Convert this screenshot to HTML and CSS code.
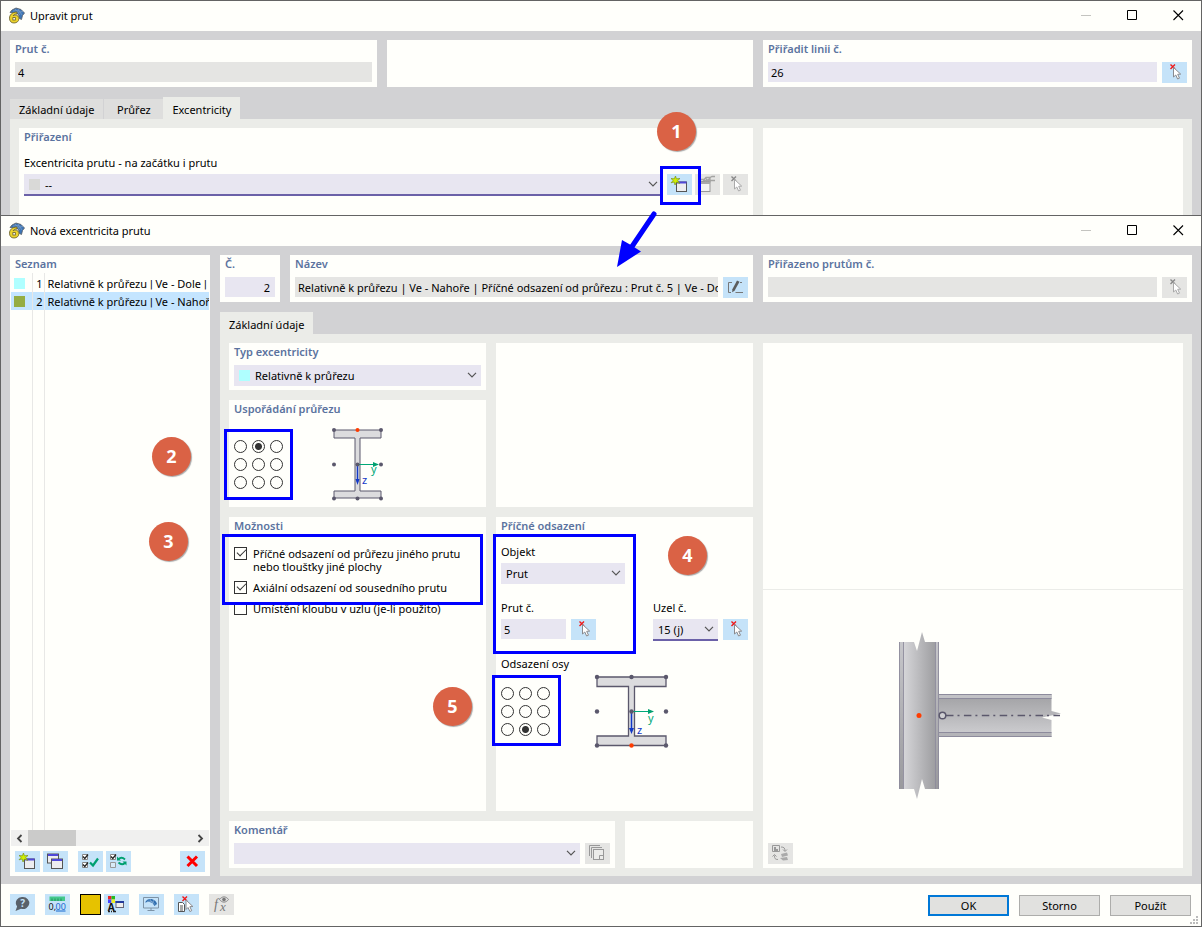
FILE: index.html
```html
<!DOCTYPE html>
<html lang="cs">
<head>
<meta charset="utf-8">
<title>Nová excentricita prutu</title>
<link rel="stylesheet" href="styles.css">
</head>
<body>
<svg class="defs" aria-hidden="true">
  <defs>
    <symbol id="i-app" viewBox="0 0 17 17">
      <path d="M2 5.500 4 3l4-2 5 1.500 3.500 3.500-2 2.500-1 4-2-1-1-4L8 6Z" fill="#3c76b8" stroke="#555a60" stroke-width=".8"/>
      <path d="M5 4 11 3.500M7 2l5 6M10 2l4 6M8 5.500l7-1" stroke="#7f9fc4" stroke-width=".7"/>
      <path d="M9 5C4 5 1.500 8 1.500 11.200c0 3 1.700 4.800 4.500 4.800 2.800 0 4.900-1.800 4.900-4.300 0-2.300-1.500-3.700-3.700-3.700-.8 0-1.500.3-2 .7C5.700 7.600 7 7 9 7Z" fill="#ecd32c" stroke="#625b27" stroke-width=".8"/>
      <rect x="4.900" y="10.600" width="2.400" height="2.400" fill="#fff" stroke="#625b27" stroke-width=".8"/>
    </symbol>
    <symbol id="i-pick" viewBox="0 0 25 21">
      <path d="m8.500 2.500 4.500 4.500M13 2.500 8.500 7" class="cross"/>
      <path d="M11.500 5.500v9.500l2.300-2 1.800 4 1.900-.8-1.800-3.900 3-.2Z" fill="#fff" class="pointer"/>
    </symbol>
    <symbol id="i-new" viewBox="0 0 25 21">
      <rect x="9.500" y="8" width="10" height="9.500" fill="#ededf0" stroke="#555"/>
      <path d="M10 7.500h9.500v2H10z" fill="#5048d8"/>
      <path d="m8.500 2 .9 2.800 3.600-.3-2.400 2 2 3-3-1.500L8 11l-.8-3-3.200.8 2.200-2.300-2.200-2 3.300.3Z" fill="#d0f000" stroke="#7a9418" stroke-width=".7"/>
    </symbol>
    <symbol id="i-edit" viewBox="0 0 25 21">
      <rect x="5.500" y="7.500" width="9.500" height="10" fill="#f4f4f2" stroke="#999"/>
      <path d="M6 8h9v2H6z" fill="#aaa"/>
      <path d="M6 5.500h3l2-2h4l2-1h3M8 6.500h12M11 4.500l2 3M15 3.500v5M10 7.500l5-3" fill="none" stroke="#a4a4a2" stroke-width="1.300"/>
    </symbol>
    <symbol id="i-copy" viewBox="0 0 25 21">
      <rect x="4.500" y="3" width="11" height="9" fill="#ededf0" stroke="#555"/><path d="M5 3h10v2H5z" fill="#5048d8"/>
      <rect x="8.500" y="8" width="11" height="9.500" fill="#ededf0" stroke="#555"/><path d="M9 8h10v2H9z" fill="#5048d8"/>
    </symbol>
    <symbol id="i-rename" viewBox="0 0 25 21">
      <path d="M9 5.500H5.500v10H8M12.500 15.500H20M17 5.500h2" fill="none" stroke="#777"/>
      <path d="m14 3.500 2.500 1.200-5 9-2.300 1.500.2-2.900Z" fill="#5c5c5c"/>
    </symbol>
    <symbol id="i-checkall" viewBox="0 0 25 21">
      <path d="M4.500 3.500h5v5h-5zM4.500 11.500h5v5h-5z" fill="#fff" stroke="#888"/>
      <path d="m5 5.500 1.800 2L10 3.500M5 13.500l1.800 2 3.200-4" fill="none" stroke="#222" stroke-width="1.300"/>
      <path d="m12 11.500 3 3 5-7" fill="none" stroke="#00a070" stroke-width="2.200"/>
    </symbol>
    <symbol id="i-invert" viewBox="0 0 25 21">
      <path d="M4.500 3.500h5v5h-5z" fill="#fff" stroke="#888"/><path d="M4.500 11.500h5v5h-5z" fill="#d9ebf7" stroke="#999"/>
      <path d="m5 5.500 1.800 2L10 3.500" fill="none" stroke="#222" stroke-width="1.300"/>
      <path d="M12.500 8c2-1.700 4.500-1.500 6.500.5M19 12c-2 1.700-4.500 1.500-6.500-.5" fill="none" stroke="#00a070" stroke-width="1.800"/>
      <path d="M11 5.500v4h4ZM20.500 14.500v-4h-4Z" fill="#00a070"/>
    </symbol>
    <symbol id="i-delete" viewBox="0 0 25 21"><path d="m7.500 5.500 9.500 9.500M17 5.500 7.500 15" stroke="#f00" stroke-width="3"/></symbol>
    <symbol id="i-help" viewBox="0 0 25 21">
      <path d="M13 3a6.300 6 0 1 1-2 11.700L5.500 17l1.600-4.500A6.200 6 0 0 1 13 3Z" fill="#59616a"/>
      <text x="10.200" y="12.800" font-size="10" font-weight="700" fill="#c5e3f9">?</text>
    </symbol>
    <symbol id="i-units" viewBox="0 0 25 21">
      <rect x="4.500" y="2.500" width="15.500" height="4.500" fill="#43c98b"/>
      <path d="M7 4.500V7M10 4.500V7M13 4.500V7M16 4.500V7" stroke="#278a5c"/>
      <text x="3.500" y="15.500" font-size="9" fill="#111">0,</text><text x="10.500" y="15.500" font-size="9" fill="#1768d0">00</text>
      <path d="M11 17h9.500" stroke="#1768d0"/>
    </symbol>
    <symbol id="i-display" viewBox="0 0 25 21">
      <path d="M4 2h3.500v3.500H4z" fill="#e22"/><path d="M7.500 2H11v3.500H7.500z" fill="#2b2"/><path d="M4 5.500h3.500V9H4z" fill="#44f"/><path d="M7.500 5.500H11V9H7.500z" fill="#ee2"/>
      <text x="3.800" y="16.500" font-size="10" font-weight="700" fill="#111">A</text>
      <path d="M4 17.500h2M7 17.500h1M9 17.500h3" stroke="#222" stroke-width="1.400"/>
      <rect x="12" y="7.500" width="7.500" height="6" fill="#eee" stroke="#667"/><path d="M11.500 7h8.500v2h-8.500z" fill="#223b9b"/>
    </symbol>
    <symbol id="i-screen" viewBox="0 0 25 21">
      <path d="M4.500 3.500h15v10.500h-15zM12 14v2.500M8.500 16.500h7" fill="none" stroke="#7d93a6"/>
      <path d="M6 8.500C7.500 5.500 10 4.500 12.500 5c3 .5 5 2.500 5.500 5l-2.500 2-2-3-3.500-1.200Z" fill="#2e6eb0"/><path d="M8 7.500c3-1 6 0 8 3M11 5l1.500 3M15 6l-1.500 3" fill="none" stroke="#a8c5e0" stroke-width=".6"/>
    </symbol>
    <symbol id="i-pickdoc" viewBox="0 0 25 21">
      <path d="M4.500 8.500h4l2 2v7h-6zM6 12h3M6 14h3M6 16h3" fill="#fff" stroke="#555"/>
      <path d="m8.500 2.500 4.500 4.500M13 2.500 8.500 7" class="cross"/>
      <path d="M12 6v9.500l2-2 1.900 4 1.800-.8-1.800-4 3-.2Z" fill="#fff" stroke="#8a8a8e"/>
    </symbol>
    <symbol id="i-fx" viewBox="0 0 25 21">
      <text x="5" y="14.500" font-size="14" font-style="italic" class="serif">f</text><text x="11" y="17" font-size="13" font-style="italic" class="serif">x</text>
      <path d="M10.500 5.500c2.500-3.500 6.500-3.500 9 0-2.500 3.500-6.500 3.500-9 0Z" fill="#ddd" stroke="#888"/><circle cx="15" cy="5.500" r="1.800" fill="#777"/>
    </symbol>
    <symbol id="i-library" viewBox="0 0 25 21">
      <path d="M4.500 13V2.500H15M6.500 15V4.500H17" fill="none" stroke="#999"/><rect x="8.500" y="6.500" width="10" height="10" fill="#ececea" stroke="#999"/><path d="M18.500 12.500h-4v4" fill="none" stroke="#999"/>
    </symbol>
    <symbol id="i-swap" viewBox="0 0 25 21">
      <path d="M4.500 2.500h7v6h-7z" fill="none" stroke="#999"/><path d="M6 4h2v2h2v2H6z" fill="#999"/>
      <path d="m13 11 6-1.500 1 3-6 1.500ZM12 15l7-1 1 3-5 .5Z" fill="#aaa"/>
      <path d="M13 4c3 0 4 1 4 4M15 6.500 17 8.500l2-2M10 16.500c-3 0-3.500-1-3.500-4M4.500 13.500l2-2 2 2" fill="none" stroke="#999"/>
    </symbol>
    <symbol id="i-chev" viewBox="0 0 10 6"><path d="m1 .8 4 4 4-4" fill="none" stroke="#555" stroke-width="1.200"/></symbol>
    <symbol id="i-min" viewBox="0 0 11 11"><path d="M0 5.500h10" stroke="#c4c4c0"/></symbol>
    <symbol id="i-max" viewBox="0 0 11 11"><path d="M.5.5h9v9h-9z" fill="none" stroke="#000"/></symbol>
    <symbol id="i-close" viewBox="0 0 11 11"><path d="m.5.5 9.500 9.500M10 .5.500 10" stroke="#000" stroke-width="1.100"/></symbol>
    <linearGradient id="g-col"><stop offset="0" stop-color="#dedee1"/><stop offset="1" stop-color="#97979a"/></linearGradient>
    <linearGradient id="g-fl" x2="0" y2="1"><stop offset="0" stop-color="#c6c6ca"/><stop offset="1" stop-color="#99999d"/></linearGradient>
    <linearGradient id="g-beam" x2="0" y2="1"><stop offset="0" stop-color="#a0a0a3"/><stop offset="1" stop-color="#d0d0d3"/></linearGradient>
  </defs>
</svg>

<section class="window window-back">
  <header class="titlebar">
    <svg class="app-icon"><use href="#i-app"/></svg><h1>Upravit prut</h1>
    <div class="win-buttons">
      <button aria-label="Minimalizovat"><svg><use href="#i-min"/></svg></button>
      <button aria-label="Maximalizovat"><svg><use href="#i-max"/></svg></button>
      <button aria-label="Zavřít"><svg><use href="#i-close"/></svg></button>
    </div>
  </header>
  <div class="window-body">
    <div class="top-row">
      <div class="panel"><label class="title" for="member">Prut č.</label><input id="member" class="field readonly" value="4" readonly></div>
      <div class="panel"></div>
      <div class="panel"><label class="title" for="line">Přiřadit linii č.</label>
        <div class="row"><input id="line" class="field" value="26"><button class="tool" aria-label="Vybrat linii"><svg><use href="#i-pick"/></svg></button></div></div>
    </div>
    <nav class="tabs"><button class="tab">Základní údaje</button><button class="tab">Průřez</button><button class="tab active">Excentricity</button></nav>
    <div class="page assign-page">
      <div class="panel assign">
        <h2 class="title">Přiřazení</h2>
        <label class="caption" for="ecc">Excentricita prutu - na začátku i prutu</label>
        <div class="row">
          <span class="combo underlined"><i class="swatch none"></i><select id="ecc" class="with-swatch"><option>--</option></select><svg class="chev"><use href="#i-chev"/></svg></span>
          <span class="tools">
            <button class="tool" aria-label="Nová excentricita"><svg><use href="#i-new"/></svg></button>
            <button class="tool disabled" aria-label="Upravit excentricitu" disabled><svg><use href="#i-edit"/></svg></button>
            <button class="tool disabled" aria-label="Vybrat excentricitu" disabled><svg><use href="#i-pick"/></svg></button>
            <span class="mark mark-1"></span><span class="badge badge-1">1</span>
            <svg class="arrow" viewBox="0 0 42 60"><path d="M38 5 15 39" stroke="#00f" stroke-width="5" stroke-linecap="round"/><path d="m1 58 5-27 8 4.500 11 7Z" fill="#00f"/></svg>
          </span>
        </div>
      </div>
      <div class="panel"></div>
    </div>
  </div>
</section>

<main class="window window-front">
  <header class="titlebar">
    <svg class="app-icon"><use href="#i-app"/></svg><h1>Nová excentricita prutu</h1>
    <div class="win-buttons">
      <button aria-label="Minimalizovat"><svg><use href="#i-min"/></svg></button>
      <button aria-label="Maximalizovat"><svg><use href="#i-max"/></svg></button>
      <button aria-label="Zavřít"><svg><use href="#i-close"/></svg></button>
    </div>
  </header>
  <div class="window-body dialog-body">
    <aside class="panel list-panel">
      <h2 class="title">Seznam</h2>
      <div class="list">
        <table>
          <tr><td><i class="swatch cyan"></i></td><td class="num">1</td><td class="name">Relativně k průřezu <span class="pipe">|</span> Ve - Dole <span class="pipe">|</span></td></tr>
          <tr class="selected"><td><i class="swatch olive"></i></td><td class="num">2</td><td class="name">Relativně k průřezu <span class="pipe">|</span> Ve - Nahoře</td></tr>
        </table>
      </div>
      <div class="scrollbar"><svg viewBox="0 0 7 9"><path d="M5.500 1 2 4.500 5.500 8" fill="none" stroke="#444" stroke-width="1.800"/></svg><i></i><svg viewBox="0 0 7 9"><path d="M1.500 1 5 4.500 1.500 8" fill="none" stroke="#444" stroke-width="1.800"/></svg></div>
      <div class="list-tools">
        <button class="tool" aria-label="Nový"><svg><use href="#i-new"/></svg></button>
        <button class="tool" aria-label="Kopírovat"><svg><use href="#i-copy"/></svg></button>
        <button class="tool apart" aria-label="Vybrat vše"><svg><use href="#i-checkall"/></svg></button>
        <button class="tool" aria-label="Invertovat výběr"><svg><use href="#i-invert"/></svg></button>
        <button class="tool last" aria-label="Smazat"><svg><use href="#i-delete"/></svg></button>
      </div>
    </aside>
    <div class="detail">
      <div class="name-row">
        <div class="panel"><label class="title" for="no">Č.</label><input id="no" class="field number" value="2"></div>
        <div class="panel"><label class="title" for="name">Název</label>
          <div class="row"><input id="name" class="field readonly long" readonly value="Relativně k průřezu | Ve - Nahoře | Příčné odsazení od průřezu : Prut č. 5 | Ve - Dole"><button class="tool" aria-label="Přejmenovat"><svg><use href="#i-rename"/></svg></button></div></div>
        <div class="panel"><label class="title" for="assigned">Přiřazeno prutům č.</label>
          <div class="row"><input id="assigned" class="field readonly" readonly><button class="tool disabled" aria-label="Vybrat pruty" disabled><svg><use href="#i-pick"/></svg></button></div></div>
      </div>
      <nav class="tabs"><button class="tab active">Základní údaje</button></nav>
      <div class="page form-page">
        <div class="form">
          <div class="form-columns">
            <div class="panel type"><label class="title" for="type">Typ excentricity</label>
              <span class="combo"><i class="swatch cyan"></i><select id="type" class="with-swatch"><option>Relativně k průřezu</option></select><svg class="chev"><use href="#i-chev"/></svg></span></div>
            <div class="panel blank"></div>
            <div class="panel arrangement">
              <h2 class="title">Uspořádání průřezu</h2>
              <div class="section-row">
                <div class="radios" role="radiogroup" aria-label="Uspořádání průřezu">
                  <input type="radio" name="a" aria-label="Vlevo nahoře"><input type="radio" name="a" aria-label="Nahoře" checked><input type="radio" name="a" aria-label="Vpravo nahoře">
                  <input type="radio" name="a" aria-label="Vlevo"><input type="radio" name="a" aria-label="Střed"><input type="radio" name="a" aria-label="Vpravo">
                  <input type="radio" name="a" aria-label="Vlevo dole"><input type="radio" name="a" aria-label="Dole"><input type="radio" name="a" aria-label="Vpravo dole">
                  <span class="mark mark-2"></span><span class="badge badge-2">2</span>
                </div>
                <svg class="profile small" viewBox="0 0 56 76">
                  <path d="M4 4h47v8H30v53h21v7H4v-7h21V12H4Z" fill="#dcdcde" stroke="#5b586c"/>
                  <path d="M27.500 38.500H44" stroke="#00a878"/><path d="m43 36 6 2.500-6 2.500Z" fill="#00a070"/><path d="M27.500 39v17" stroke="#1238c8" stroke-width="1.500"/><path d="m25.500 53 2 6 2-6Z" fill="#1238c8"/>
                  <g fill="#5b586c"><circle cx="4" cy="4" r="2"/><circle cx="51" cy="4" r="2"/><circle cx="4" cy="38.500" r="2"/><circle cx="27.500" cy="38.500" r="2"/><circle cx="51" cy="38.500" r="2"/><circle cx="4" cy="72.500" r="2"/><circle cx="27.500" cy="72.500" r="2"/><circle cx="51" cy="72.500" r="2"/></g><circle cx="27.500" cy="4" r="2" fill="#ff3c00"/>
                  <text x="41" y="47" fill="#00a878">y</text><text x="32" y="58" fill="#1238c8">z</text>
                </svg>
              </div>
            </div>
            <div class="panel options">
              <h2 class="title">Možnosti</h2>
              <div class="checks">
                <label><input type="checkbox" checked><span>Příčné odsazení od průřezu jiného prutu<br>nebo tloušťky jiné plochy</span></label>
                <label><input type="checkbox" checked><span>Axiální odsazení od sousedního prutu</span></label>
                <label><input type="checkbox"><span>Umístění kloubu v uzlu (je-li použito)</span></label>
                <span class="mark mark-3"></span><span class="badge badge-3">3</span>
              </div>
            </div>
            <div class="panel offset">
              <h2 class="title">Příčné odsazení</h2>
              <div class="offset-fields">
                <div class="item object"><label class="caption" for="obj">Objekt</label><span class="combo"><select id="obj"><option>Prut</option></select><svg class="chev"><use href="#i-chev"/></svg></span></div>
                <div class="item"><label class="caption" for="refmember">Prut č.</label><div class="row"><input id="refmember" class="field short" value="5"><button class="tool" aria-label="Vybrat prut"><svg><use href="#i-pick"/></svg></button></div></div>
                <div class="item right"><label class="caption" for="node">Uzel č.</label><div class="row"><span class="combo short underlined"><select id="node"><option>15 (j)</option></select><svg class="chev"><use href="#i-chev"/></svg></span><button class="tool" aria-label="Vybrat uzel"><svg><use href="#i-pick"/></svg></button></div></div>
                <span class="mark mark-4"></span><span class="badge badge-4">4</span>
              </div>
              <div class="caption axis-caption">Odsazení osy</div>
              <div class="section-row axis">
                <div class="radios" role="radiogroup" aria-label="Odsazení osy">
                  <input type="radio" name="b" aria-label="Vlevo nahoře"><input type="radio" name="b" aria-label="Nahoře"><input type="radio" name="b" aria-label="Vpravo nahoře">
                  <input type="radio" name="b" aria-label="Vlevo"><input type="radio" name="b" aria-label="Střed"><input type="radio" name="b" aria-label="Vpravo">
                  <input type="radio" name="b" aria-label="Vlevo dole"><input type="radio" name="b" aria-label="Dole" checked><input type="radio" name="b" aria-label="Vpravo dole">
                  <span class="mark mark-5"></span><span class="badge badge-5">5</span>
                </div>
                <svg class="profile" viewBox="0 0 78 76">
                  <path d="M4 4h69v9.500H41.500v49.500H73V72.500H4v-9.500h31.500V13.500H4Z" fill="#dcdcde" stroke="#5b586c" stroke-width="1.300"/>
                  <path d="M38.500 38.500H56" stroke="#00a878"/><path d="m55 36 6 2.500-6 2.500Z" fill="#00a070"/><path d="M38.500 39v17" stroke="#1238c8" stroke-width="1.500"/><path d="m36 55 2.500 6 2.500-6Z" fill="#1238c8"/>
                  <g fill="#5b586c"><circle cx="4" cy="4" r="2.200"/><circle cx="38.500" cy="4" r="2.200"/><circle cx="73" cy="4" r="2.200"/><circle cx="4" cy="38.500" r="2.200"/><circle cx="38.500" cy="38.500" r="2.200"/><circle cx="73" cy="38.500" r="2.200"/><circle cx="4" cy="72.500" r="2.200"/><circle cx="73" cy="72.500" r="2.200"/></g><circle cx="38.500" cy="72.500" r="2.200" fill="#ff3c00"/>
                  <text x="55" y="49" fill="#00a878">y</text><text x="44" y="61" fill="#1238c8">z</text>
                </svg>
              </div>
            </div>
          </div>
          <div class="comment-row">
            <div class="panel comment"><label class="title" for="comment">Komentář</label>
              <div class="row"><span class="combo"><select id="comment"><option></option></select><svg class="chev"><use href="#i-chev"/></svg></span><button class="tool disabled" aria-label="Knihovna komentářů" disabled><svg><use href="#i-library"/></svg></button></div></div>
            <div class="panel filler"></div>
          </div>
        </div>
        <div class="panel preview">
          <div class="preview-top"></div>
          <div class="preview-bottom">
            <div class="stage">
              <svg viewBox="0 0 176 170" class="joint" role="img" aria-label="Spoj prutů">
                <path d="M54 62h112.500v17l9.500 2.500-19 4 9.500 2.500v17H54Z" fill="url(#g-beam)"/>
                <path d="M54 62h112.500v4.500H54Z" fill="#c2c2c6"/><path d="M54 100.500h112.500v4.500H54Z" fill="#b4b4b8"/>
                <path d="M54 62.500h112.500M54 66.500h112.500M54 100.500h112.500M54 104.500h112.500" stroke="#8d8b9c"/>
                <path d="M14 10h15l3 9 5-19 3 10h14v147H40l-3-10-5 20-3-10H14Z" fill="url(#g-col)"/>
                <path d="M14 10h4v147h-4ZM50 10h4v147h-4Z" fill="url(#g-fl)"/>
                <path d="M14.500 10v147M18.500 10v147M50.500 10v147M53.500 10v147" stroke="#8d8b9c" stroke-width=".9"/>
                <path d="M61 83.500h114" stroke="#5b586c" stroke-width="1.400" stroke-dasharray="7.500 4 2 4.400"/>
                <circle cx="57.500" cy="83.500" r="3.300" fill="#cfcfd2" stroke="#5b586c" stroke-width="1.500"/><circle cx="34" cy="83.500" r="2.500" fill="#ff3c00"/>
              </svg>
            </div>
            <button class="tool disabled" aria-label="Přepnout obrázek" disabled><svg><use href="#i-swap"/></svg></button>
          </div>
        </div>
      </div>
    </div>
  </div>
  <footer class="footer">
    <div class="footer-tools">
      <button class="tool" aria-label="Nápověda"><svg><use href="#i-help"/></svg></button>
      <button class="tool" aria-label="Jednotky"><svg><use href="#i-units"/></svg></button>
      <div class="color-pair"><button class="color" aria-label="Barva"></button><button class="tool" aria-label="Zobrazení"><svg><use href="#i-display"/></svg></button></div>
      <button class="tool" aria-label="Náhled"><svg><use href="#i-screen"/></svg></button>
      <button class="tool" aria-label="Vybrat objekty"><svg><use href="#i-pickdoc"/></svg></button>
      <button class="tool disabled" aria-label="Vzorec" disabled><svg><use href="#i-fx"/></svg></button>
    </div>
    <div class="actions"><button class="action primary">OK</button><button class="action">Storno</button><button class="action">Použít</button></div>
    <svg class="grip" viewBox="0 0 8 8"><path d="M6 0h2v2H6zM3 3h2v2H3zM6 3h2v2H6zM0 6h2v2H0zM3 6h2v2H3zM6 6h2v2H6z" fill="#bbb"/></svg>
  </footer>
</main>
</body>
</html>
```
FILE: styles.css
```css
:root {
  --paper: #fffffb;
  --frame: #d2d2d4;
  --page: #ebece8;
  --field: #e8e6f1;
  --disabled: #e5e5e3;
  --tool: #c5e3f9;
  --title: #5b739f;
  --accent: #6b61a8;
}
* { box-sizing: border-box; }
body {
  margin: 0;
  padding-bottom: 7px;
  min-height: 100vh;
  display: flex;
  flex-direction: column;
  background: #fff;
  color: #000;
  font: 11px/14px "Noto Sans", "Open Sans", sans-serif;
}
button, input, select { font: inherit; color: inherit; margin: 0; border: 0; border-radius: 0; }
button { padding: 0; background: none; }
h1, h2 { margin: 0; font: inherit; }
svg { display: block; }
.defs { position: absolute; width: 0; height: 0; }

.window { border: 1px solid #646464; background: var(--frame); display: flex; flex-direction: column; }
.window-back { border-bottom: 0; }
.window-front { flex: 1; }
.titlebar { height: 30px; display: flex; align-items: center; background: var(--paper); padding: 0 0 1px 7px; }
.app-icon { width: 17px; height: 17px; margin-right: 5px; }
.win-buttons { margin-left: auto; display: flex; }
.win-buttons button { width: 46px; height: 28px; display: grid; place-items: center; }
.win-buttons svg { width: 11px; height: 11px; }
.window-body { padding: 9px 9px 0; }

.panel { background: var(--paper); padding: 0 5px 4px; min-width: 0; }
.title { display: block; font-weight: 600; line-height: 18px; margin-bottom: 4px; color: var(--title); }
.row { display: flex; align-items: flex-start; gap: 5px; }
.field { display: block; width: 100%; min-width: 0; height: 20px; padding: 1px 3px 0; background: var(--field); outline: 0; }
.field.readonly { background: var(--disabled); }
.field.number { text-align: right; padding-right: 5px; }
.field.long { padding-right: 0; }
.tool { width: 25px; height: 21px; flex: none; background: var(--tool); }
.tool svg { width: 25px; height: 21px; }
.tool.disabled { background: var(--disabled); --cross: #888; --pointer: #aaa; }
.cross { stroke: var(--cross, #f01818); stroke-width: 1.4; }
.pointer { stroke: var(--pointer, #8a8a8e); }
.serif { font-family: "Liberation Serif", serif; fill: #777; }
.combo { position: relative; display: block; flex: 1; min-width: 0; }
.combo select { display: block; width: 100%; height: 21px; appearance: none; background: var(--field); padding: 1px 18px 0 5px; outline: 0; }
.combo select.with-swatch { padding-left: 21px; }
.combo.underlined { border-bottom: 2px solid var(--accent); }
.combo.underlined select { height: 20px; }
.combo .swatch { position: absolute; left: 5px; top: 5px; }
.combo.short { flex: none; }
.chev { position: absolute; right: 4px; top: 7px; width: 10px; height: 6px; pointer-events: none; }
.swatch { display: block; width: 11px; height: 11px; }
.none { background: #d9d9d7; }
.cyan { background: #afffff; }
.olive { background: #95ad43; }

.top-row { display: grid; grid-template-columns: 367fr 366fr 429fr; gap: 10px; }
.tabs { display: flex; align-items: flex-end; height: 22px; margin-top: 10px; }
.tab { height: 20px; min-width: 60px; padding: 2px 9px 0; background: #dededd; }
.tab + .tab { border-left: 1px solid var(--frame); }
.tab.active { height: 22px; background: var(--page); border-left: 0; padding-top: 4px; }
.page { background: var(--page); padding: 9px; }
.assign-page { display: grid; grid-template-columns: 734fr 420fr; gap: 10px; padding-bottom: 0; }
.assign { padding-bottom: 19px; }
.caption { display: block; line-height: 14px; margin-bottom: 4px; }
.assign .caption { margin-top: 10px; }
.tools { position: relative; display: flex; gap: 3px; }

.dialog-body { flex: 1; display: grid; grid-template-columns: 200px minmax(0, 1fr); gap: 10px; padding-bottom: 8px; }
.list-panel { display: flex; flex-direction: column; padding: 0 1px 4px; }
.list-panel .title { margin: 0 0 0 4px; }
.list {
  flex: 1;
  overflow: hidden;
  padding-top: 1px;
  background: linear-gradient(#e8e8e6, #e8e8e6) 21px 0 / 1px 100% no-repeat, linear-gradient(#e8e8e6, #e8e8e6) 33px 0 / 1px 100% no-repeat;
}
.list table { width: 100%; table-layout: fixed; border-collapse: collapse; }
.list td { height: 18px; padding: 1px 0 0; white-space: nowrap; overflow: hidden; }
.list td:first-child { width: 21px; padding: 0 0 0 3px; }
.list td.num { width: 12px; text-align: right; padding-right: 1px; border-left: 1px solid #e8e8e6; }
.list td.name { padding-left: 3px; border-left: 1px solid #e8e8e6; }
.list .selected { background: #c4e5ff; }
.pipe { font-family: Roboto, sans-serif; line-height: 1; }
.scrollbar { height: 16px; display: flex; align-items: center; background: #f0f0ef; margin-bottom: 5px; }
.scrollbar i { width: 48px; height: 100%; background: #cbcbca; margin-right: auto; }
.scrollbar svg { width: 7px; height: 9px; margin: 0 5px; }
.list-tools { display: flex; gap: 3px; padding: 0 4px; }
.list-tools .apart { margin-left: 7px; }
.list-tools .last { margin-left: auto; }

.detail { display: flex; flex-direction: column; min-width: 0; }
.name-row { display: grid; grid-template-columns: 60px minmax(0, 463fr) minmax(0, 429fr); gap: 10px; }
.form-page { flex: 1; display: grid; grid-template-columns: minmax(0, 524fr) minmax(0, 420fr); gap: 10px; padding-bottom: 8px; }
.form { display: flex; flex-direction: column; gap: 10px; min-width: 0; }
.form-columns { flex: 1; display: grid; grid-template-columns: minmax(0, 1fr) minmax(0, 1fr); grid-template-rows: auto auto 1fr; gap: 10px; }
.blank { grid-area: 1 / 2 / 3 / 3; }
.type { grid-area: 1 / 1; }
.arrangement { grid-area: 2 / 1; padding-bottom: 5px; }
.comment-row { display: grid; grid-template-columns: minmax(0, 386fr) minmax(0, 128fr); gap: 10px; }
.section-row { display: flex; align-items: center; margin-top: 8px; gap: 47px; }
.radios { position: relative; display: grid; grid-template-columns: repeat(3, 13px); gap: 5px; }
.radios input { appearance: none; width: 13px; height: 13px; border: 1px solid #333; border-radius: 50%; background: var(--paper); }
.radios input:checked { background: radial-gradient(circle, #333 3px, var(--paper) 4px); }
.profile { width: 78px; height: 76px; font-size: 11px; }
.profile.small { width: 56px; }
.checks { position: relative; margin-top: 12px; display: grid; gap: 8px; }
.checks label { display: flex; gap: 6px; line-height: 13px; white-space: nowrap; }
.checks input { appearance: none; flex: none; width: 13px; height: 13px; border: 1px solid #333; background: var(--paper); position: relative; }
.checks input:checked::after { content: ""; position: absolute; left: 2px; top: 1px; width: 8px; height: 4px; border: solid #333; border-width: 0 0 1px 1px; transform: rotate(-45deg); }
.offset-fields { position: relative; margin-top: 10px; display: grid; grid-template-columns: 1fr auto; row-gap: 17px; }
.object { grid-column: 1 / 3; width: 124px; }
.short { flex: none; width: 65px; }
.axis-caption { margin: 16px 0 0; }
.section-row.axis { margin-top: 2px; gap: 43px; }

.preview { display: flex; flex-direction: column; padding: 0; }
.preview-top { flex: 9 0 0; }
.preview-bottom { flex: 10 0 0; display: flex; flex-direction: column; border-top: 1px solid #ebece8; padding: 0 5px 4px; }
.stage { flex: 1; display: grid; place-items: center; }
.joint { width: 176px; height: 170px; }

.footer { position: relative; display: flex; justify-content: space-between; background: var(--paper); padding: 10px 9px; }
.footer-tools { display: flex; gap: 10px; }
.color-pair { display: flex; gap: 3px; }
.color { width: 21px; height: 21px; background: #e6c200; border: 1px solid #000; }
.actions { display: flex; gap: 10px; padding: 1px 1px 0 0; }
.action { width: 81px; height: 21px; background: #e1e1df; border: 1px solid #adadab; }
.action.primary { border: 2px solid #0078d7; }
.grip { position: absolute; right: 3px; bottom: 2px; width: 8px; height: 8px; }

.mark { position: absolute; border: 3px solid #00f; pointer-events: none; z-index: 2; }
.badge {
  position: absolute;
  z-index: 3;
  width: 39px;
  height: 39px;
  border-radius: 50%;
  background: #da6245;
  color: #fff;
  font: bold 18px/38px "Open Sans", sans-serif;
  text-align: center;
  box-shadow: 1px 1px 1px #aaa;
}
.mark-1 { left: -7px; top: -8px; width: 41px; height: 39px; }
.badge-1 { left: -10px; top: -62px; }
.arrow { position: absolute; z-index: 2; left: -51px; top: 35px; width: 42px; height: 60px; }
.mark-2 { left: -10px; top: -11px; width: 69px; height: 71px; }
.badge-2 { left: -82px; top: -3px; }
.mark-3 { left: -12px; right: -2px; top: -13px; height: 71px; }
.badge-3 { left: -85px; top: -25px; }
.mark-4 { left: -8px; top: -11px; width: 143px; height: 120px; }
.badge-4 { left: 167px; top: -9px; }
.mark-5 { left: -9px; top: -12px; width: 69px; height: 71px; }
.badge-5 { left: -68px; top: 0; }
```
